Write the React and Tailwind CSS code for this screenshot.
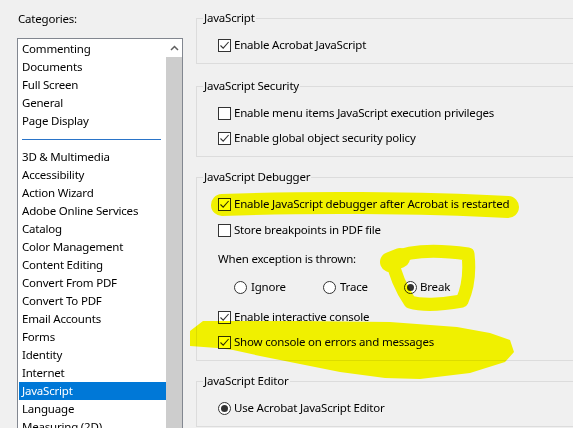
import React from 'react';

const categoriesTop = ["Commenting", "Documents", "Full Screen", "General", "Page Display"];
const categoriesBottom = [
  "3D & Multimedia", "Accessibility", "Action Wizard", "Adobe Online Services", "Catalog",
  "Color Management", "Content Editing", "Convert From PDF", "Convert To PDF", "Email Accounts",
  "Forms", "Identity", "Internet", "JavaScript", "Language", "Measuring (2D)",
];

function Check({ checked }) {
  return (
    <span className="w-[13px] h-[13px] border border-[#333333] bg-white flex items-center justify-center shrink-0">
      {checked && (
        <svg width="11" height="11" viewBox="0 0 11 11">
          <path d="M1.5 5.5 L4.2 8.2 L9.6 2" stroke="#333333" strokeWidth="1.1" fill="none" />
        </svg>
      )}
    </span>
  );
}

function Radio({ checked }) {
  return (
    <span className="w-[13px] h-[13px] rounded-full border border-[#333333] bg-white flex items-center justify-center shrink-0">
      {checked && <span className="w-[7px] h-[7px] rounded-full bg-[#333333]" />}
    </span>
  );
}

function CheckRow({ checked, label, className = "" }) {
  return (
    <div className={"flex items-center h-[18px] gap-[3px] " + className}>
      <Check checked={checked} />
      <span>{label}</span>
    </div>
  );
}

function Group({ title, className = "", children }) {
  return (
    <fieldset className={"border border-[#dcdcdc] w-[420px] " + className}>
      <legend className="ml-[6px] px-[1px] leading-[18px]">{title}</legend>
      <div className="pt-[9px] pb-[9px] pl-[21px] flex flex-col">{children}</div>
    </fieldset>
  );
}

export default function App() {
  return (
    <div className="relative w-[573px] h-[428px] overflow-hidden bg-[#f0f0f0] font-['Noto_Sans',sans-serif] text-[11.5px] tracking-[-0.2px] leading-[18px] text-black flex">
      {/* categories list */}
      <div className="pl-[17px] pt-[10px] w-[183px] shrink-0">
        <div className="h-[18px] pl-[1px]">Categories:</div>
        <div className="mt-[10px] w-[166px] h-[420px] border border-[#828790] bg-white flex">
          <div className="w-[148px] pt-[1px] flex flex-col">
            {categoriesTop.map((c) => (
              <div key={c} className="h-[18px] ml-[1px] pl-[3px] whitespace-nowrap">{c}</div>
            ))}
            <div className="h-[18px]">
              <div className="mt-[9px] ml-[4px] w-[139px] h-px bg-[#2a74c8]" />
            </div>
            {categoriesBottom.map((c) => (
              <div
                key={c}
                className={
                  "h-[18px] ml-[1px] pl-[3px] whitespace-nowrap " +
                  (c === "JavaScript" ? "bg-[#0078d7] text-white" : "")
                }
              >
                {c}
              </div>
            ))}
          </div>
          <div className="w-[16px] flex flex-col">
            <div className="h-[18px] flex items-center justify-center">
              <svg width="9" height="6" viewBox="0 0 9 6">
                <path d="M1 5 L4.5 1.5 L8 5" stroke="#606060" strokeWidth="1.5" fill="none" />
              </svg>
            </div>
            <div className="flex-1 bg-[#cdcdcd]" />
          </div>
        </div>
      </div>

      {/* settings */}
      <div className="ml-[13px] pt-[9px] w-[400px] shrink-0 flex flex-col">
        <Group title="JavaScript">
          <CheckRow checked label="Enable Acrobat JavaScript" />
        </Group>

        <Group title="JavaScript Security" className="mt-[13px]">
          <CheckRow label="Enable menu items JavaScript execution privileges" />
          <CheckRow checked label="Enable global object security policy" className="mt-[7px]" />
        </Group>

        <Group title="JavaScript Debugger" className="mt-[11px]">
          <CheckRow checked label="Enable JavaScript debugger after Acrobat is restarted" />
          <CheckRow label="Store breakpoints in PDF file" className="mt-[8px]" />
          <div className="h-[18px] mt-[11px]">When exception is thrown:</div>
          <div className="h-[18px] mt-[10px] pl-[16px] flex items-center">
            <div className="w-[89px] flex items-center gap-[4px]">
              <Radio />
              <span>Ignore</span>
            </div>
            <div className="w-[81px] flex items-center gap-[4px]">
              <Radio />
              <span>Trace</span>
            </div>
            <div className="flex items-center gap-[3px]">
              <Radio checked />
              <span>Break</span>
            </div>
          </div>
          <CheckRow checked label="Enable interactive console" className="mt-[12px]" />
          <CheckRow checked label="Show console on errors and messages" className="mt-[7px]" />
        </Group>

        <Group title="JavaScript Editor" className="mt-[11px]">
          <div className="flex items-center h-[18px] gap-[3px]">
            <Radio checked />
            <span>Use Acrobat JavaScript Editor</span>
          </div>
        </Group>
      </div>

      {/* yellow marker scribbles */}
      <svg
        className="absolute inset-0 pointer-events-none mix-blend-multiply"
        width="573"
        height="428"
        viewBox="0 0 573 428"
      >
        <g fill="none" stroke="#ffff00" strokeLinecap="round" strokeLinejoin="round">
          <path d="M 222 205 C 300 202, 420 202, 508 207" strokeWidth="22" />
          <path
            d="M 392 259 C 410 250, 440 250, 468 254 C 470 272, 468 288, 462 301 C 440 305, 420 305, 410 302 C 402 290, 395 275, 392 259 Z"
            strokeWidth="13"
          />
          <path d="M 390 262 L 400 258" strokeWidth="20" />
        </g>
        <polygon
          fill="#ffff00"
          points="190,331 203,321 300,321 390,322 457,327 490,333 510,340 514,352 505,362 470,373 420,379 385,378 340,372 300,364 260,356 233,350 217,348 190,346"
        />
      </svg>
    </div>
  );
}
